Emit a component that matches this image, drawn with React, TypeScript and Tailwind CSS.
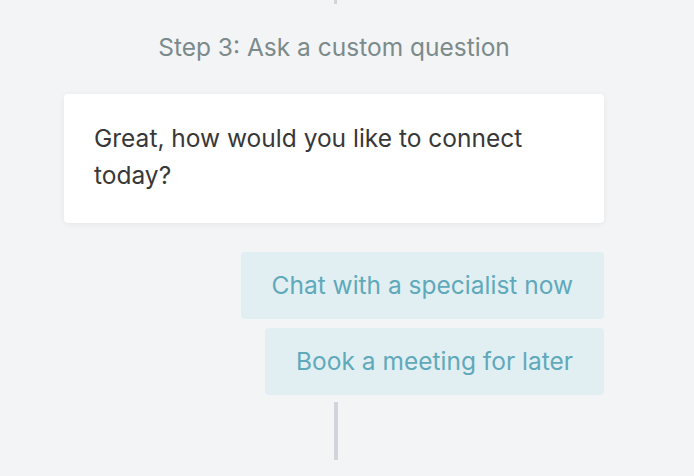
export default function App() {
  return (
    <div className="w-full h-[476px] bg-[#f3f4f6] overflow-hidden" style={{ fontFamily: "Inter, 'Noto Sans', sans-serif" }}>
      <div className="w-[540px] ml-[64px] flex flex-col">
        <div className="ml-[270px] w-[3px] h-[4px] bg-[#d1d5db]" />
        <div className="mt-[27px] text-center text-[24.5px] leading-[32px] text-[#7b8a8b]">Step 3: Ask a custom question</div>
        <div className="mt-[31px] bg-white rounded-[4px] shadow-[0_1px_6px_rgba(0,0,0,0.06)] px-[30px] pt-[26px] pb-[29px] text-[24.5px] leading-[37px] text-[#383838]">
          Great, how would you like to connect today?
        </div>
        <div className="mt-[29px] flex flex-col items-end gap-[9px]">
          <div className="h-[67px] px-[31px] flex items-center rounded-[4px] bg-[#e1eff3] text-[24.5px] text-[#5fa9ba]">Chat with a specialist now</div>
          <div className="h-[67px] px-[31px] flex items-center rounded-[4px] bg-[#e1eff3] text-[24.5px] text-[#5fa9ba]">Book a meeting for later</div>
        </div>
        <div className="mt-[7px] ml-[270px] w-[4px] h-[58px] bg-[#d1d5db]" />
      </div>
    </div>
  );
}
